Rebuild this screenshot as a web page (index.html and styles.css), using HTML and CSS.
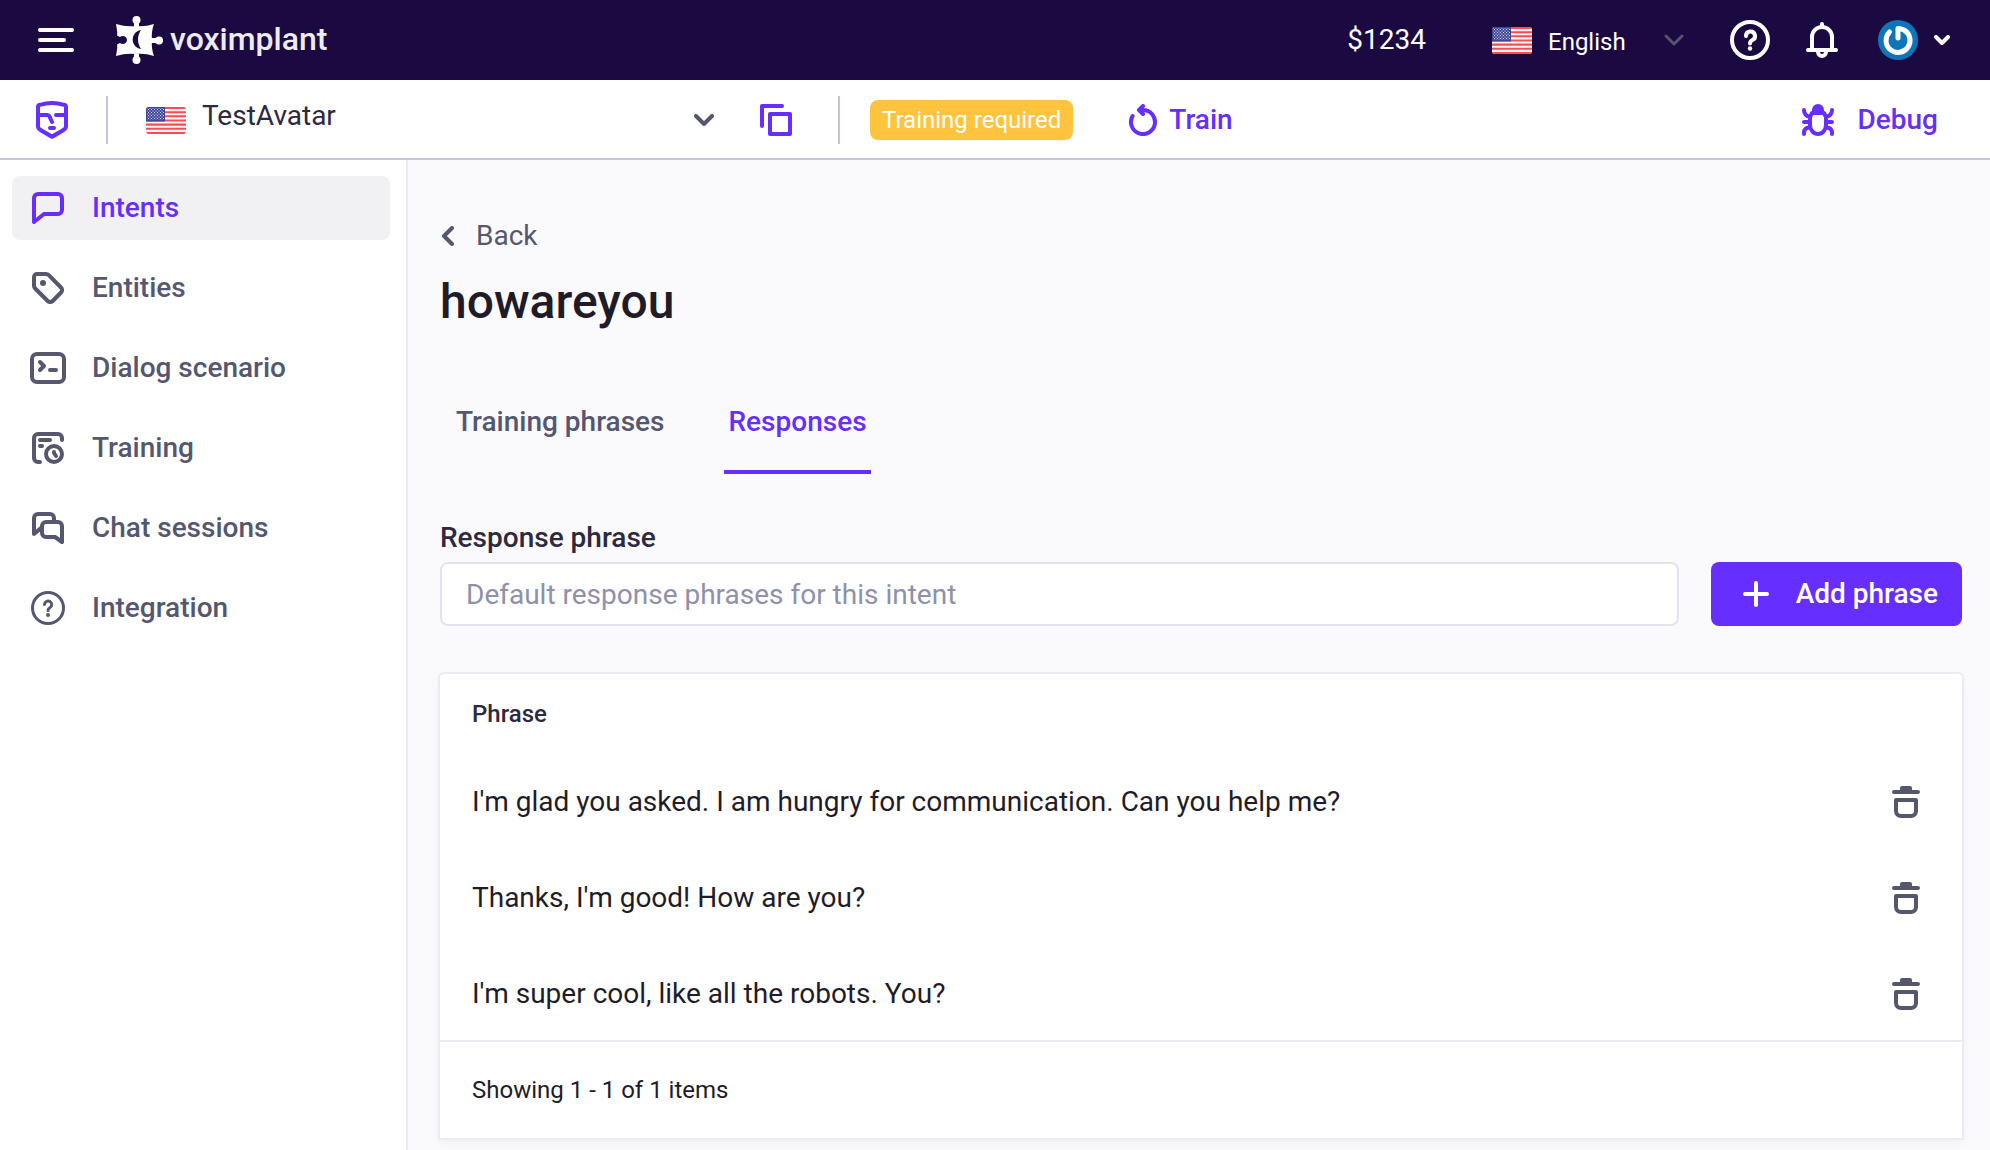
FILE: index.html
```html
<!DOCTYPE html>
<html lang="en">
<head>
<meta charset="utf-8">
<title>howareyou – Responses</title>
<link rel="stylesheet" href="styles.css">
</head>
<body>
<svg class="defs" aria-hidden="true">
  <defs>
    <pattern id="stars" width="3" height="3" patternUnits="userSpaceOnUse"><circle cx="1" cy="1" r=".6" fill="#fff"/><circle cx="2.5" cy="2.5" r=".5" fill="#fff"/></pattern>
    <clipPath id="flag-clip"><rect width="40" height="27" rx="3"/></clipPath>
    <symbol id="flag" viewBox="0 0 40 27">
      <g clip-path="url(#flag-clip)">
        <rect width="40" height="27" fill="#f5f5f5"/>
        <path d="M0 1h40M0 5.2h40M0 9.3h40M0 13.5h40M0 17.6h40M0 21.8h40M0 26h40" stroke="#ff4b55" stroke-width="2.1"/>
        <rect width="19" height="14.5" fill="#41479b"/>
        <rect x="1" y="1" width="17" height="12" fill="url(#stars)"/>
      </g>
    </symbol>
    <symbol id="trash" viewBox="0 0 28 32">
      <path d="M2 6h24M4 14h20v11a5 5 0 0 1-5 5H9a5 5 0 0 1-5-5z"/>
      <path d="M10 4V2h8v2z"/>
    </symbol>
  </defs>
</svg>

<header class="topbar">
  <button class="icon-button" type="button" aria-label="Menu"><svg class="icon" width="36" height="24" viewBox="0 0 36 24"><path d="M2 2h32M2 12h24M2 22h32"/></svg></button>
  <a class="logo" href="#">
    <svg width="48" height="48" viewBox="0 0 48 48" aria-hidden="true">
      <path fill="#fff" d="M0 8Q10 11 19 10Q29 11 38 8Q35 16 36 24Q35 32 38 40Q29 37 19 38Q10 37 0 40Q2 32 1 24Q2 16 0 8zM18 5h5v6h-5zM18 37h5v6h-5zM35 22h7v5h-7z"/>
      <g fill="#fff"><circle cx="20.500" cy="4" r="4"/><circle cx="20.500" cy="44" r="4"/><circle cx="43" cy="24.500" r="4"/></g>
      <path fill="#1b0a42" d="M0 19l4 2c2-2 7-1 7 3s-5 5-7 3l-4 2zM25 14c-11 2-11 17 0 19-4-6-4-13 0-19z"/>
    </svg>
    <span>voximplant</span>
  </a>
  <div class="account">
    <span class="balance">$1234</span>
    <div class="picker picker-language">
      <svg width="40" height="27" aria-hidden="true"><use href="#flag"/></svg>
      <select aria-label="Language"><option>English</option></select>
      <svg class="icon chevron" width="20" height="12" viewBox="0 0 20 12"><path d="M2 2l8 8 8-8"/></svg>
    </div>
    <button class="icon-button help" type="button" aria-label="Help"><svg class="icon" width="40" height="40" viewBox="0 0 40 40"><circle cx="20" cy="20" r="18"/><path d="M16 16a4.500 4.500 0 1 1 6.500 4c-2 1-2.500 1.800-2.500 3.500"/><circle class="solid" cx="20" cy="28.500" r="2.200"/></svg></button>
    <button class="icon-button bell" type="button" aria-label="Notifications"><svg class="icon" width="32" height="36" viewBox="0 0 32 36"><path d="M2 28h28M6 28V15a10 10 0 0 1 20 0v13M16 2v2M12 29v1a4 4 0 0 0 8 0v-1"/></svg></button>
    <button class="icon-button profile" type="button" aria-label="Profile">
      <svg width="40" height="40" viewBox="0 0 40 40"><circle cx="20" cy="20" r="20" fill="#0e76b8"/><path d="M11.500 12A12 12 0 1 0 26 10Q23 8.500 20 8.500V18" fill="none" stroke="#fff" stroke-width="5" stroke-linecap="round" stroke-linejoin="round"/></svg>
      <svg class="icon" width="16" height="10" viewBox="0 0 16 10"><path d="M2 2l6 6 6-6"/></svg>
    </button>
  </div>
</header>

<div class="toolbar">
  <a class="avatar-link" href="#" aria-label="Avatars"><svg class="icon" width="32" height="38" viewBox="0 0 32 38"><path d="M2 6c0-1 1-2 2-2.200C11 1.700 21 1.700 28 3.800c1 .2 2 1.200 2 2.200v19.500c0 1-.5 2-1.400 2.600C25 31 20 33 16 35.800 12 33 7 31 3.400 28.100 2.500 27.500 2 26.500 2 25.500zM3 14h8.500c1 0 1.500.5 2 1.500L16 21M20 14h9M14 27h4"/></svg></a>
  <span class="divider"></span>
  <div class="picker picker-avatar">
    <svg width="40" height="27" aria-hidden="true"><use href="#flag"/></svg>
    <select aria-label="Avatar"><option>TestAvatar</option></select>
    <svg class="icon chevron" width="20" height="12" viewBox="0 0 20 12"><path d="M2 2l8 8 8-8"/></svg>
  </div>
  <button class="icon-button accent copy" type="button" aria-label="Copy"><svg class="icon" width="32" height="32" viewBox="0 0 32 32"><path d="M2 22V2h20M10 10h20v20H10z"/></svg></button>
  <span class="divider"></span>
  <span class="badge">Training required</span>
  <button class="text-button train" type="button"><svg class="icon" width="28" height="32" viewBox="0 0 28 32"><path d="M3.600 12A12 12 0 1 0 14 6h-3M14 2l-4 4 4 4"/></svg>Train</button>
  <button class="text-button debug" type="button"><svg class="icon" width="32" height="32" viewBox="0 0 32 32"><path d="M10 9h12l2 4v8a8 9 0 0 1-16 0v-8zM2 6c0 4 2 6 6 7M30 6c0 4-2 6-6 7M2 18h6M24 18h6M2 30v-1c0-4 2-5 6-6M30 30v-1c0-4-2-5-6-6"/><path class="solid" d="M10 10V6a6 6 0 0 1 12 0v4z"/></svg>Debug</button>
</div>

<div class="layout">
  <nav class="sidebar">
    <a class="nav-item active" href="#"><svg class="icon" width="32" height="32" viewBox="0 0 32 32"><path d="M2 30V6a4 4 0 0 1 4-4h20a4 4 0 0 1 4 4v12a4 4 0 0 1-4 4H12z"/></svg>Intents</a>
    <a class="nav-item" href="#"><svg class="icon" width="32" height="32" viewBox="0 0 32 32"><path d="M2 5a3 3 0 0 1 3-3h9c1 0 2 .4 2.800 1.200L29 15.500a3.500 3.500 0 0 1 0 5L20.700 29a3.500 3.500 0 0 1-5 0L3.200 16.500A4 4 0 0 1 2 13.700z"/><circle class="solid" cx="11" cy="11" r="3"/></svg>Entities</a>
    <a class="nav-item" href="#"><svg class="icon" width="36" height="32" viewBox="0 0 36 32"><rect x="2" y="2" width="32" height="28" rx="5"/><path d="M10 10l4 4-4 4M20 18h6"/></svg>Dialog scenario</a>
    <a class="nav-item" href="#"><svg class="icon" width="32" height="32" viewBox="0 0 32 32"><path d="M30 8V6a4 4 0 0 0-4-4H6a4 4 0 0 0-4 4v20a4 4 0 0 0 4 4h2M8 8h10M8 14h2M22 20v1l2 3"/><circle cx="22" cy="22" r="8"/></svg>Training</a>
    <a class="nav-item" href="#"><svg class="icon" width="32" height="32" viewBox="0 0 32 32"><path d="M22 8V6a4 4 0 0 0-4-4H6a4 4 0 0 0-4 4v16l7-6M30 30V14a4 4 0 0 0-4-4H14a4 4 0 0 0-4 4v7a4 4 0 0 0 4 4h9z"/></svg>Chat sessions</a>
    <a class="nav-item" href="#"><svg class="icon icon-thin" width="36" height="36" viewBox="0 0 36 36"><circle cx="18" cy="18" r="15.500"/><path d="M14.500 14.500a3.600 3.600 0 1 1 5.300 3.300c-1.400.8-1.800 1.400-1.800 2.700"/><circle class="solid" cx="18" cy="25" r="2"/></svg>Integration</a>
  </nav>

  <main class="content">
    <a class="back" href="#"><svg class="icon" width="12" height="20" viewBox="0 0 12 20"><path d="M10 2l-8 8 8 8"/></svg>Back</a>
    <h1>howareyou</h1>
    <div class="tabs" role="tablist">
      <button class="tab" type="button" role="tab" aria-selected="false">Training phrases</button>
      <button class="tab" type="button" role="tab" aria-selected="true">Responses</button>
    </div>
    <form class="phrase-form">
      <label for="phrase">Response phrase</label>
      <div class="phrase-row">
        <input id="phrase" type="text" placeholder="Default response phrases for this intent">
        <button class="primary" type="button"><svg class="icon" width="26" height="26" viewBox="0 0 26 26"><path d="M13 2v22M2 13h22"/></svg>Add phrase</button>
      </div>
    </form>
    <section class="card">
      <table>
        <thead><tr><th scope="col" colspan="2">Phrase</th></tr></thead>
        <tbody>
          <tr><td>I'm glad you asked. I am hungry for communication. Can you help me?</td><td class="actions"><button class="icon-button" type="button" aria-label="Delete"><svg class="icon" width="28" height="32"><use href="#trash"/></svg></button></td></tr>
          <tr><td>Thanks, I'm good! How are you?</td><td class="actions"><button class="icon-button" type="button" aria-label="Delete"><svg class="icon" width="28" height="32"><use href="#trash"/></svg></button></td></tr>
          <tr><td>I'm super cool, like all the robots. You?</td><td class="actions"><button class="icon-button" type="button" aria-label="Delete"><svg class="icon" width="28" height="32"><use href="#trash"/></svg></button></td></tr>
        </tbody>
      </table>
      <footer class="card-footer">Showing 1 - 1 of 1 items</footer>
    </section>
  </main>
</div>
</body>
</html>
```
FILE: styles.css
```css
:root {
  --accent: #662eff;
  --muted: #55576f;
  --ink: #1f1c28;
  --label: #2d293f;
  --line: #ebebf2;
}

* { box-sizing: border-box; }

body {
  margin: 0;
  min-height: 100vh;
  display: flex;
  flex-direction: column;
  background: #fafafc;
  color: var(--ink);
  font: 400 28px/40px Roboto, "Liberation Sans", sans-serif;
}

a { color: inherit; text-decoration: none; }

button, input, select { font: inherit; color: inherit; }

button {
  margin: 0;
  padding: 0;
  border: 0;
  background: none;
  cursor: pointer;
}

svg { flex: none; display: block; }

.defs { position: absolute; width: 0; height: 0; }

.icon {
  fill: none;
  stroke: currentColor;
  stroke-width: 4px;
  stroke-linecap: round;
  stroke-linejoin: round;
}
.icon-thin { stroke-width: 3px; }
.icon .solid { fill: currentColor; stroke: none; }

.icon-button { display: flex; align-items: center; }

/* Top bar */
.topbar {
  display: flex;
  align-items: center;
  height: 80px;
  padding: 0 40px 0 38px;
  background: #1b0a42;
  color: #fff;
}
.logo {
  display: flex;
  align-items: center;
  gap: 6px;
  margin-left: 42px;
  color: #ececf1;
  font-size: 32px;
  font-weight: 500;
}
.logo span { padding-bottom: 2px; }
.account { display: flex; align-items: center; margin-left: auto; }
.balance { margin-right: 66px; }
.help { margin-right: 36px; }
.bell { margin-right: 40px; }
.profile { gap: 16px; }

.picker { display: flex; align-items: center; }
.picker select {
  flex: 1;
  min-width: 0;
  height: 48px;
  padding: 0;
  border: 0;
  background: none;
  appearance: none;
}
.picker-language { width: 192px; margin-right: 46px; gap: 16px; font-size: 24px; }
.picker-language select { padding-top: 3px; }
.picker-language .chevron { color: #56526f; stroke-width: 3px; }

/* Avatar toolbar */
.toolbar {
  display: flex;
  align-items: center;
  height: 80px;
  padding: 2px 52px 0 36px;
  border-bottom: 2px solid #c4c4d6;
  background: #fff;
}
.divider { width: 2px; height: 48px; background: #c4c4d6; }
.avatar-link { margin-right: 38px; color: var(--accent); }
.picker-avatar { width: 568px; margin-left: 38px; gap: 16px; color: var(--label); }
.picker-avatar select { padding-bottom: 8px; }
.picker-avatar .chevron { color: var(--muted); }
.accent { color: var(--accent); }
.copy { margin: 0 46px; }
.badge {
  margin: 0 56px 0 30px;
  padding: 0 12px;
  border-radius: 8px;
  background: #ffc43d;
  color: #fff;
  font-size: 24px;
}
.text-button {
  display: flex;
  align-items: center;
  color: var(--accent);
  font-weight: 500;
}
.train { gap: 12px; }
.debug { gap: 24px; margin-left: auto; }

/* Page body */
.layout { flex: 1; display: flex; }

.sidebar {
  flex: none;
  display: flex;
  flex-direction: column;
  gap: 16px;
  width: 408px;
  padding: 16px 16px 16px 12px;
  border-right: 2px solid var(--line);
  background: #fff;
}
.nav-item {
  display: grid;
  grid-template-columns: 40px 1fr;
  align-items: center;
  column-gap: 24px;
  height: 64px;
  padding: 0 16px;
  border-radius: 8px;
  color: var(--muted);
  font-weight: 500;
}
.nav-item .icon { justify-self: center; }
.nav-item.active { background: #f1f1f4; color: var(--accent); }

.content { flex: 1; min-width: 0; padding: 56px 28px 8px 32px; }

.back {
  display: flex;
  align-items: center;
  gap: 22px;
  width: fit-content;
  padding-left: 2px;
  color: var(--muted);
}

h1 { margin: 18px 0 72px; font-size: 48px; line-height: 56px; font-weight: 500; }

.tabs { display: flex; gap: 56px; margin-bottom: 40px; padding-left: 12px; }
.tab {
  padding: 0 4px 28px;
  border-bottom: 4px solid transparent;
  color: var(--muted);
  font-weight: 500;
}
.tab[aria-selected="true"] { border-color: var(--accent); color: var(--accent); }

.phrase-form label { display: block; color: var(--label); font-weight: 500; line-height: 48px; }
.phrase-row { display: flex; gap: 32px; }
.phrase-row input {
  flex: 1;
  min-width: 0;
  height: 64px;
  padding: 0 24px;
  border: 2px solid #e3e3eb;
  border-radius: 8px;
  background: #fff;
}
.phrase-row input::placeholder { color: #8f90aa; opacity: 1; }
.primary {
  display: flex;
  align-items: center;
  gap: 27px;
  padding: 0 24px 0 32px;
  border-radius: 8px;
  background: var(--accent);
  color: #fff;
  font-weight: 500;
}

.card {
  margin-top: 48px;
  border-radius: 4px 4px 0 0;
  background: #fff;
  box-shadow: 0 0 0 2px var(--line), 0 4px 12px rgba(45, 41, 63, .06);
}
table { width: 100%; border-collapse: collapse; }
th {
  height: 80px;
  padding: 0 32px;
  color: var(--label);
  font-size: 24px;
  font-weight: 500;
  text-align: left;
}
td { height: 96px; padding: 0 32px; }
.actions { width: 92px; padding: 0 42px 0 0; }
.actions .icon-button { margin-left: auto; color: var(--muted); }
.card-footer {
  height: 98px;
  margin-top: -2px;
  padding: 0 32px;
  border-top: 2px solid var(--line);
  font-size: 24px;
  line-height: 96px;
}
```
